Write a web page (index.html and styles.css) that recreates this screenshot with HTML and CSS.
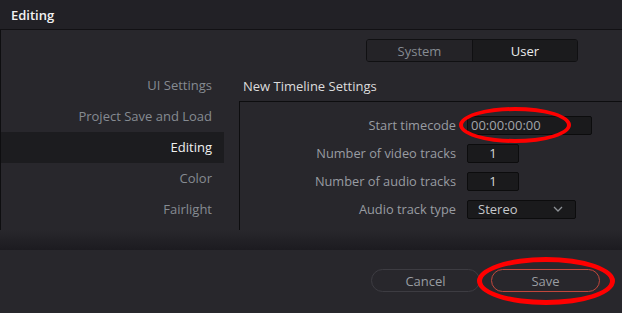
FILE: index.html
```html
<!DOCTYPE html>
<html lang="en">
<head>
<meta charset="UTF-8" />
<title>Preferences — Editing</title>
<link rel="stylesheet" href="styles.css">
</head>
<body>

<div class="window">
  <header class="titlebar">Editing</header>

  <div class="content">
    <nav class="sidebar">
      <a href="#">UI Settings</a>
      <a href="#">Project Save and Load</a>
      <a href="#" class="active">Editing</a>
      <a href="#">Color</a>
      <a href="#">Fairlight</a>
    </nav>

    <main class="main">
      <div class="tabs">
        <button class="tab">System</button>
        <button class="tab selected">User</button>
      </div>

      <h2 class="section-title">New Timeline Settings</h2>

      <div class="panel">
        <div class="row">
          <label>Start timecode</label>
          <input class="field timecode" type="text" value="00:00:00:00" />
        </div>
        <div class="row">
          <label>Number of video tracks</label>
          <input class="field small" type="text" value="1" />
        </div>
        <div class="row">
          <label>Number of audio tracks</label>
          <input class="field small" type="text" value="1" />
        </div>
        <div class="row">
          <label>Audio track type</label>
          <div class="field select">
            <span>Stereo</span>
            <svg width="10" height="6" viewBox="0 0 10 6"><path d="M1 1 L5 5 L9 1" fill="none" stroke="#8d9196" stroke-width="1.3"/></svg>
          </div>
        </div>
      </div>
    </main>
  </div>

  <div class="shade"></div>

  <footer class="footer">
    <button class="pill">Cancel</button>
    <button class="pill save">Save</button>
  </footer>

  <!-- red annotation marks -->
  <div class="mark mark-timecode"></div>
  <div class="mark mark-save"></div>
</div>

</body>
</html>
```

FILE: styles.css
```css
* { box-sizing: border-box; }
body {
  margin: 0;
  background: #28272c;
  font-family: 'Open Sans', 'Noto Sans', sans-serif;
  font-size: 13px;
}
.window {
  position: relative;
  width: 622px;
  height: 313px;
  overflow: hidden;
  background: #28272c;
}
.titlebar {
  height: 30px;
  background: #222126;
  border-bottom: 1px solid #121114;
  color: #f2f2f2;
  font-weight: 600;
  padding: 6px 11px 0;
  line-height: 19px;
}
.content {
  display: flex;
  height: 200px;
  border-left: 1px solid #0e0e10;
}
.sidebar {
  width: 223px;
  padding-top: 40px;
  display: flex;
  flex-direction: column;
}
.sidebar a {
  height: 31px;
  line-height: 31px;
  text-align: right;
  padding-right: 12px;
  color: #868b92;
  text-decoration: none;
}
.sidebar a.active {
  background: #1c1c1f;
  color: #f0f0f0;
}
.main {
  flex: 1;
  margin-left: 15px;
  display: flex;
  flex-direction: column;
}
.tabs {
  display: flex;
  align-self: flex-end;
  margin: 9px 44px 0 0;
  border: 1px solid #101012;
  border-radius: 3px;
  overflow: hidden;
}
.tab {
  width: 105px;
  height: 21px;
  border: none;
  background: #242327;
  color: #868b92;
  font: inherit;
  padding: 0;
  line-height: 20px;
}
.tab.selected {
  background: #1b1b1d;
  color: #ececec;
  border-left: 1px solid #101012;
}
.section-title {
  margin: 15px 0 0 4px;
  font-size: 13px;
  font-weight: 400;
  color: #dcdcdc;
  line-height: 18px;
}
.panel {
  flex: 1;
  margin-top: 6px;
  border-top: 1px solid #0d0d0f;
  border-left: 1px solid #0d0d0f;
  padding-top: 13px;
  display: flex;
  flex-direction: column;
  gap: 8px;
}
.row {
  display: flex;
  align-items: center;
  height: 20px;
}
.row label {
  width: 217px;
  text-align: right;
  color: #989ca2;
  padding-right: 1px;
  font-size: 12.8px;
}
.field {
  margin-left: 10px;
  height: 19px;
  background: #1a1a1c;
  border: 1px solid #0c0c0d;
  border-radius: 2px;
  font: inherit;
  color: #d6d6d6;
  padding: 0 3px;
  outline: none;
}
.timecode {
  width: 125px;
  color: #a2a5aa;
}
.small {
  width: 52px;
  text-align: center;
}
.select {
  width: 109px;
  display: flex;
  align-items: center;
  justify-content: space-between;
  padding: 0 12px 0 10px;
  color: #c6c8cb;
}
.shade {
  height: 20px;
  background: linear-gradient(#28272c, #1c1b20);
}
.footer {
  height: 63px;
  display: flex;
  justify-content: flex-end;
  gap: 11px;
  padding: 19px 22px 0 0;
}
.pill {
  width: 109px;
  height: 23px;
  border-radius: 12px;
  border: 1px solid #3d3c42;
  background: transparent;
  color: #999da2;
  font: inherit;
  padding: 0;
}
.pill.save {
  border-color: #c2473c;
}
.mark {
  position: absolute;
  border: 4px solid #ff0000;
  border-radius: 50%;
}
.mark-timecode {
  left: 459px;
  top: 107px;
  width: 112px;
  height: 36px;
}
.mark-save {
  left: 477px;
  top: 257px;
  width: 138px;
  height: 48px;
  border-width: 5px;
}
```
